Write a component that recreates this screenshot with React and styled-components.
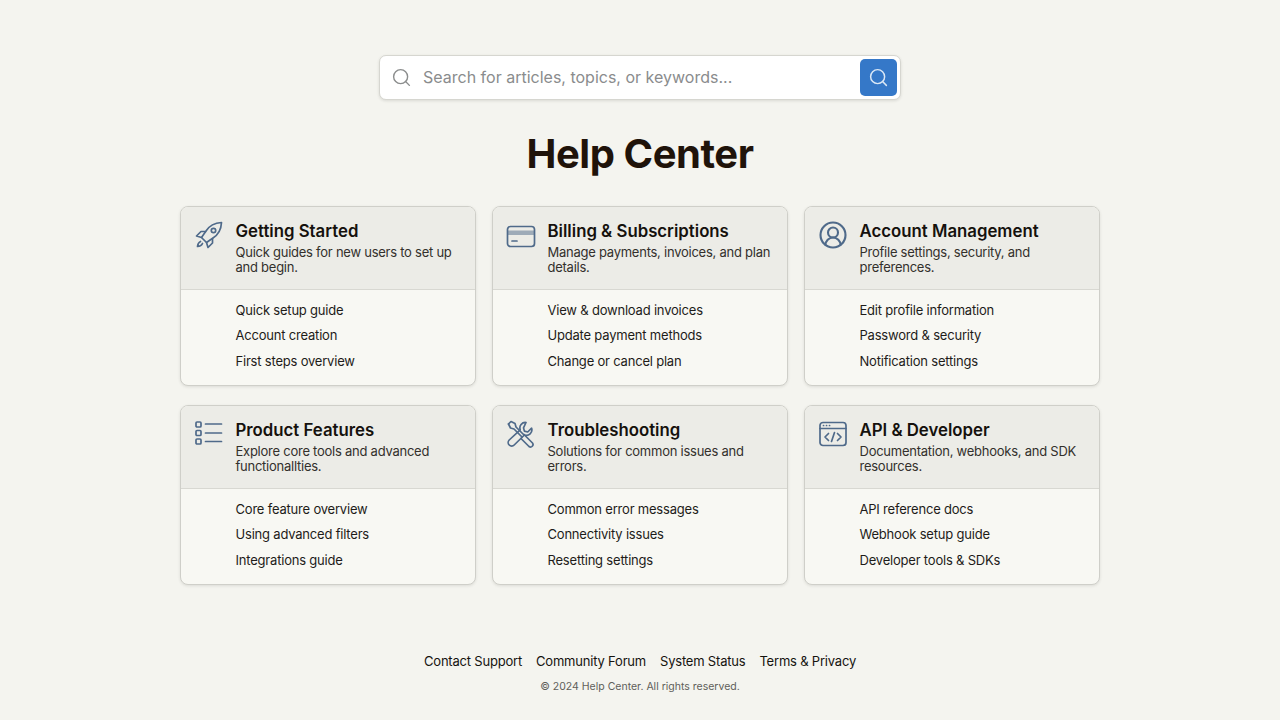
import React from 'react';
import styled, { createGlobalStyle } from 'styled-components';
import { Search, CircleUserRound } from 'lucide-react';

const GlobalStyle = createGlobalStyle`
  html, body {
    margin: 0;
    padding: 0;
    background: #f4f4ef;
  }
  body {
    font-family: Inter, "Liberation Sans", sans-serif;
    color: #15110d;
  }
`

const Page = styled.div`
  width: 1280px;
  height: 720px;
  overflow: hidden;
  display: flex;
  flex-direction: column;
  align-items: center;
  padding-top: 55px;
  box-sizing: border-box;
  background: #f4f4ef;
`

const SearchBar = styled.div`
  width: 522px;
  height: 45px;
  box-sizing: border-box;
  display: flex;
  align-items: center;
  padding: 0 3px 0 11px;
  background: #fff;
  border: 1px solid #d6d6d0;
  border-radius: 7px;
  box-shadow: 0 1px 3px rgba(60, 60, 50, 0.14);
  color: #8b8d8d;
`

const Placeholder = styled.div`
  flex: 1;
  margin-left: 11px;
  margin-top: -1px;
  font-size: 16px;
  color: #8a8c8d;
`

const SearchButton = styled.div`
  width: 37px;
  height: 37px;
  display: flex;
  align-items: center;
  justify-content: center;
  background: #3578c8;
  border-radius: 5px;
  color: #dbe8f6;
`

const Title = styled.h1`
  margin: 27px 0 0;
  height: 53px;
  line-height: 54px;
  font-size: 40px;
  font-weight: 700;
  letter-spacing: -0.45px;
  color: #1f130a;
`

const Grid = styled.div`
  margin-top: 26px;
  display: grid;
  grid-template-columns: repeat(3, 296px);
  grid-auto-rows: 180px;
  gap: 19px 16px;
`

const Card = styled.section`
  box-sizing: border-box;
  display: flex;
  flex-direction: column;
  background: #f8f8f3;
  border: 1px solid #cfcfc9;
  border-radius: 8px;
  box-shadow: 0 1px 3px rgba(60, 60, 50, 0.12);
  overflow: hidden;
`

const CardHeader = styled.div`
  height: 83px;
  box-sizing: border-box;
  display: flex;
  padding: 13px 10px 0 13px;
  background: #ecece7;
  border-bottom: 1px solid #d8d8d2;
`

const IconSlot = styled.div`
  width: 30px;
  height: 30px;
  margin-right: 11.5px;
  flex: none;
  color: #4f6a8a;
`

const CardTitle = styled.h2`
  margin: 0;
  font-size: 16.8px;
  line-height: 22px;
  font-weight: 600;
  color: #15110d;
`

const CardText = styled.p`
  margin: 2.5px 0 0;
  font-size: 13px;
  line-height: 15.5px;
  letter-spacing: -0.25px;
  color: #33302c;
`

const LinkList = styled.div`
  display: flex;
  flex-direction: column;
  gap: 6.75px;
  padding: 10.5px 0 0 54.5px;
`

const ItemLink = styled.a`
  font-size: 13px;
  line-height: 19px;
  letter-spacing: -0.2px;
  color: #1e1c19;
`

const FooterLinks = styled.nav`
  margin-top: 66px;
  display: flex;
  gap: 14px;
`

const FooterLink = styled.a`
  font-size: 13px;
  line-height: 20px;
  letter-spacing: -0.2px;
  color: #15130f;
`

const Copyright = styled.div`
  margin-top: 7.5px;
  font-size: 10.5px;
  line-height: 16px;
  color: #605e5a;
`

const ICON = { fill: 'none', stroke: 'currentColor', strokeWidth: 1.7, strokeLinecap: 'round', strokeLinejoin: 'round' }

const RocketIcon = () => (
  <svg width="30" height="30" viewBox="0 0 30 30" {...ICON}>
    <path d="M27.5 2.500c-6.500.3-12 3-15.500 8.500l-4.500 6.500 5 5 6.500-4.500c5.500-3.500 8.200-9 8.500-15.500z" />
    <circle cx="19.500" cy="10.500" r="2.200" />
    <path d="M11.500 11.500H7l-4.500 4.500 5 1.500" />
    <path d="M18.500 18.500V23l-4.500 4.500-1.500-5" />
    <path d="M6.500 21.500c-1.800.8-2.800 2.500-3 5 2.500-.2 4.200-1.200 5-3" />
  </svg>
)

const CardIcon = () => (
  <svg width="30" height="30" viewBox="0 0 30 30" {...ICON}>
    <rect x="1.500" y="6.500" width="27" height="20" rx="3" />
    <path d="M2 10.500h26v4.500H2z" fill="currentColor" fillOpacity=".5" stroke="none" />
    <path d="M6 21h5" />
  </svg>
)

const ListIcon = () => (
  <svg width="30" height="30" viewBox="0 0 30 30" {...ICON}>
    <rect x="2" y="3" width="5" height="5" rx="1" />
    <rect x="2" y="11.500" width="5" height="5" rx="1" />
    <rect x="2" y="20" width="5" height="5" rx="1" />
    <path d="M11.500 5h16M11.500 14h16M11.500 22.500h16" />
  </svg>
)

const ToolsIcon = () => (
  <svg width="30" height="30" viewBox="0 0 30 30" {...ICON}>
    <path d="M2.500 5 5 2.500 9 4.500l1 3.500 8 8" />
    <path d="M2.500 5l2 4 3.500 1 8 8" />
    <path d="M18 15.500l8.500 8.500a2.500 2.500 0 0 1-3.500 3.500L15 19.500" />
    <path d="M20 3.500a5.500 5.500 0 0 0-5.800 7.300L3.200 21a3.500 3.500 0 0 0 5 5l10.200-10a5.500 5.500 0 0 0 7.200-6.800l-3.900 3.800-3.300-.9-.9-3.300z" />
  </svg>
)

const CodeIcon = () => (
  <svg width="30" height="30" viewBox="0 0 30 30" {...ICON}>
    <rect x="2" y="3.500" width="26" height="23" rx="3" />
    <path d="M2 9.500h26" />
    <path d="M5.500 6.500h.1M8.500 6.500h.1M11.500 6.500h.1" />
    <path d="M10.500 14.500 7 18l3.500 3.500M19.500 14.500 23 18l-3.500 3.500M16.500 13.500l-3 9" />
  </svg>
)

const categories = [
  {
    icon: <RocketIcon />,
    title: 'Getting Started',
    text: 'Quick guides for new users to set up and begin.',
    links: ['Quick setup guide', 'Account creation', 'First steps overview'],
  },
  {
    icon: <CardIcon />,
    title: 'Billing & Subscriptions',
    text: 'Manage payments, invoices, and plan details.',
    links: ['View & download invoices', 'Update payment methods', 'Change or cancel plan'],
  },
  {
    icon: <CircleUserRound size={30} strokeWidth={1.7} />,
    title: 'Account Management',
    text: 'Profile settings, security, and preferences.',
    links: ['Edit profile information', 'Password & security', 'Notification settings'],
  },
  {
    icon: <ListIcon />,
    title: 'Product Features',
    text: 'Explore core tools and advanced functionallties.',
    links: ['Core feature overview', 'Using advanced filters', 'Integrations guide'],
  },
  {
    icon: <ToolsIcon />,
    title: 'Troubleshooting',
    text: 'Solutions for common issues and errors.',
    links: ['Common error messages', 'Connectivity issues', 'Resetting settings'],
  },
  {
    icon: <CodeIcon />,
    title: 'API & Developer',
    text: 'Documentation, webhooks, and SDK resources.',
    links: ['API reference docs', 'Webhook setup guide', 'Developer tools & SDKs'],
  },
]

const footerLinks = ['Contact Support', 'Community Forum', 'System Status', 'Terms & Privacy']

export default function App() {
  return (
    <Page>
      <GlobalStyle />
      <SearchBar>
        <Search size={21} strokeWidth={1.6} />
        <Placeholder>Search for articles, topics, or keywords...</Placeholder>
        <SearchButton>
          <Search size={21} strokeWidth={1.7} />
        </SearchButton>
      </SearchBar>
      <Title>Help Center</Title>
      <Grid>
        {categories.map(cat => (
          <Card key={cat.title}>
            <CardHeader>
              <IconSlot>{cat.icon}</IconSlot>
              <div>
                <CardTitle>{cat.title}</CardTitle>
                <CardText>{cat.text}</CardText>
              </div>
            </CardHeader>
            <LinkList>
              {cat.links.map(link => <ItemLink key={link}>{link}</ItemLink>)}
            </LinkList>
          </Card>
        ))}
      </Grid>
      <FooterLinks>
        {footerLinks.map(link => <FooterLink key={link}>{link}</FooterLink>)}
      </FooterLinks>
      <Copyright>© 2024 Help Center. All rights reserved.</Copyright>
    </Page>
  )
}
